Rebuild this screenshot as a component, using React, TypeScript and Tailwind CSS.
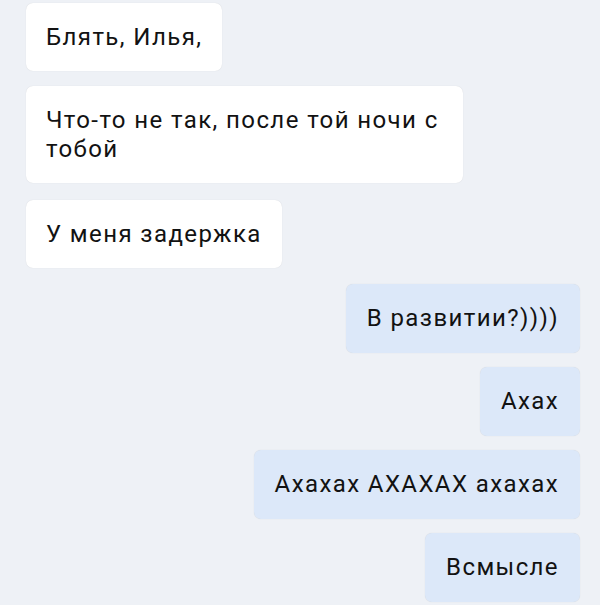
import React from "react";

type Msg = { text: string; out: boolean; gap: string };

const messages: Msg[] = [
  { text: "Блять, Илья,", out: false, gap: "" },
  { text: "Что-то не так, после той ночи с тобой", out: false, gap: "mt-[1px]" },
  { text: "У меня задержка", out: false, gap: "mt-[3px]" },
  { text: "В развитии?))))", out: true, gap: "mt-[2px]" },
  { text: "Ахах", out: true, gap: "" },
  { text: "Ахахах АХАХАХ ахахах", out: true, gap: "" },
  { text: "Всмысле", out: true, gap: "" },
];

function Bubble({ text, out, gap }: Msg) {
  const base =
    "max-w-[437px] rounded-[7px] pt-[20px] text-[24px] leading-[29px] tracking-[1.4px] text-[#121212] shadow-[0_0_1px_rgba(0,0,0,0.14)]";
  return (
    <div
      className={
        out
          ? `${base} ${gap} self-end bg-[#dce8f9] px-[21px] pb-[20px]`
          : `${base} ${gap} self-start bg-white px-[20px] pb-[19px]`
      }
    >
      {text}
    </div>
  );
}

export default function App() {
  return (
    <div
      className="flex h-[605px] w-[600px] flex-col gap-[14px] overflow-hidden bg-[#eef1f6] pl-[26px] pr-[20px] pt-[3px]"
      style={{ fontFamily: "Roboto, 'Noto Sans', sans-serif" }}
    >
      {messages.map((m, i) => (
        <Bubble key={i} {...m} />
      ))}
    </div>
  );
}
